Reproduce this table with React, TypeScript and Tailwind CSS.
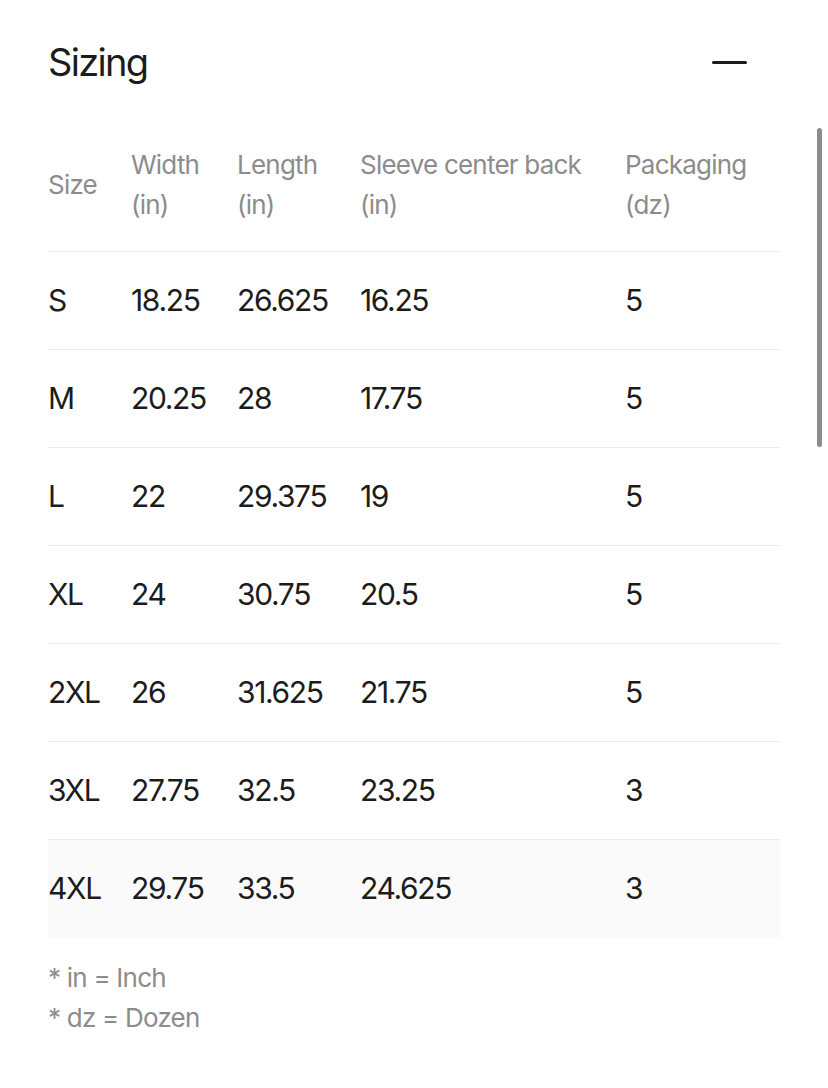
import React from 'react';

const rows = [
  { size: 'S', width: '18.25', length: '26.625', sleeve: '16.25', pack: '5' },
  { size: 'M', width: '20.25', length: '28', sleeve: '17.75', pack: '5' },
  { size: 'L', width: '22', length: '29.375', sleeve: '19', pack: '5' },
  { size: 'XL', width: '24', length: '30.75', sleeve: '20.5', pack: '5' },
  { size: '2XL', width: '26', length: '31.625', sleeve: '21.75', pack: '5' },
  { size: '3XL', width: '27.75', length: '32.5', sleeve: '23.25', pack: '3' },
  { size: '4XL', width: '29.75', length: '33.5', sleeve: '24.625', pack: '3' },
];

const App = () => {
  return (
    <div className="relative min-h-[1088px] w-full bg-white font-['Inter',sans-serif] text-[#1c1c1c]">
      <div className="px-12 pt-[38px]">
        {/* Title */}
        <div className="flex h-[48px] items-center justify-between">
          <h2 className="text-[38px] leading-[48px] tracking-[-0.045em] text-[#1c1c1c]">Sizing</h2>
          <div className="mr-[33px] h-[3px] w-[35px] rounded-sm bg-[#1c1c1c]" />
        </div>

        {/* Table */}
        <table className="mt-[59px] w-full border-collapse text-left">
          <colgroup>
            <col className="w-[83px]" />
            <col className="w-[106px]" />
            <col className="w-[123px]" />
            <col className="w-[265px]" />
            <col />
          </colgroup>
          <thead>
            <tr className="border-b border-[#ececec] text-[26px] leading-[40px] tracking-[-0.03em] text-[#8c8c8c]">
              <th className="pb-[26px] align-middle font-normal">Size</th>
              <th className="pb-[26px] align-top font-normal">
                Width
                <br />
                (in)
              </th>
              <th className="pb-[26px] align-top font-normal">
                Length
                <br />
                (in)
              </th>
              <th className="pb-[26px] align-top font-normal">
                Sleeve center back
                <br />
                (in)
              </th>
              <th className="pb-[26px] align-top font-normal">
                Packaging
                <br />
                (dz)
              </th>
            </tr>
          </thead>
          <tbody>
            {rows.map((r, i) => (
              <tr
                key={r.size}
                className={`h-[98px] text-[30px] tracking-[-0.045em] ${
                  i === rows.length - 1 ? 'bg-[#fafafa]' : 'border-b border-[#ececec]'
                }`}
              >
                <td className="align-middle">{r.size}</td>
                <td className="align-middle">{r.width}</td>
                <td className="align-middle">{r.length}</td>
                <td className="align-middle">{r.sleeve}</td>
                <td className="align-middle">{r.pack}</td>
              </tr>
            ))}
          </tbody>
        </table>

        {/* Notes */}
        <div className="mt-[20px] text-[26px] leading-[40px] tracking-[-0.03em] text-[#8c8c8c]">
          <p>* in = Inch</p>
          <p>* dz = Dozen</p>
        </div>
      </div>

      {/* scroll indicator */}
      <div className="absolute right-[6px] top-[128px] h-[319px] w-[5px] rounded-full bg-[#8c8c8c]" />
    </div>
  );
};

export default App;
